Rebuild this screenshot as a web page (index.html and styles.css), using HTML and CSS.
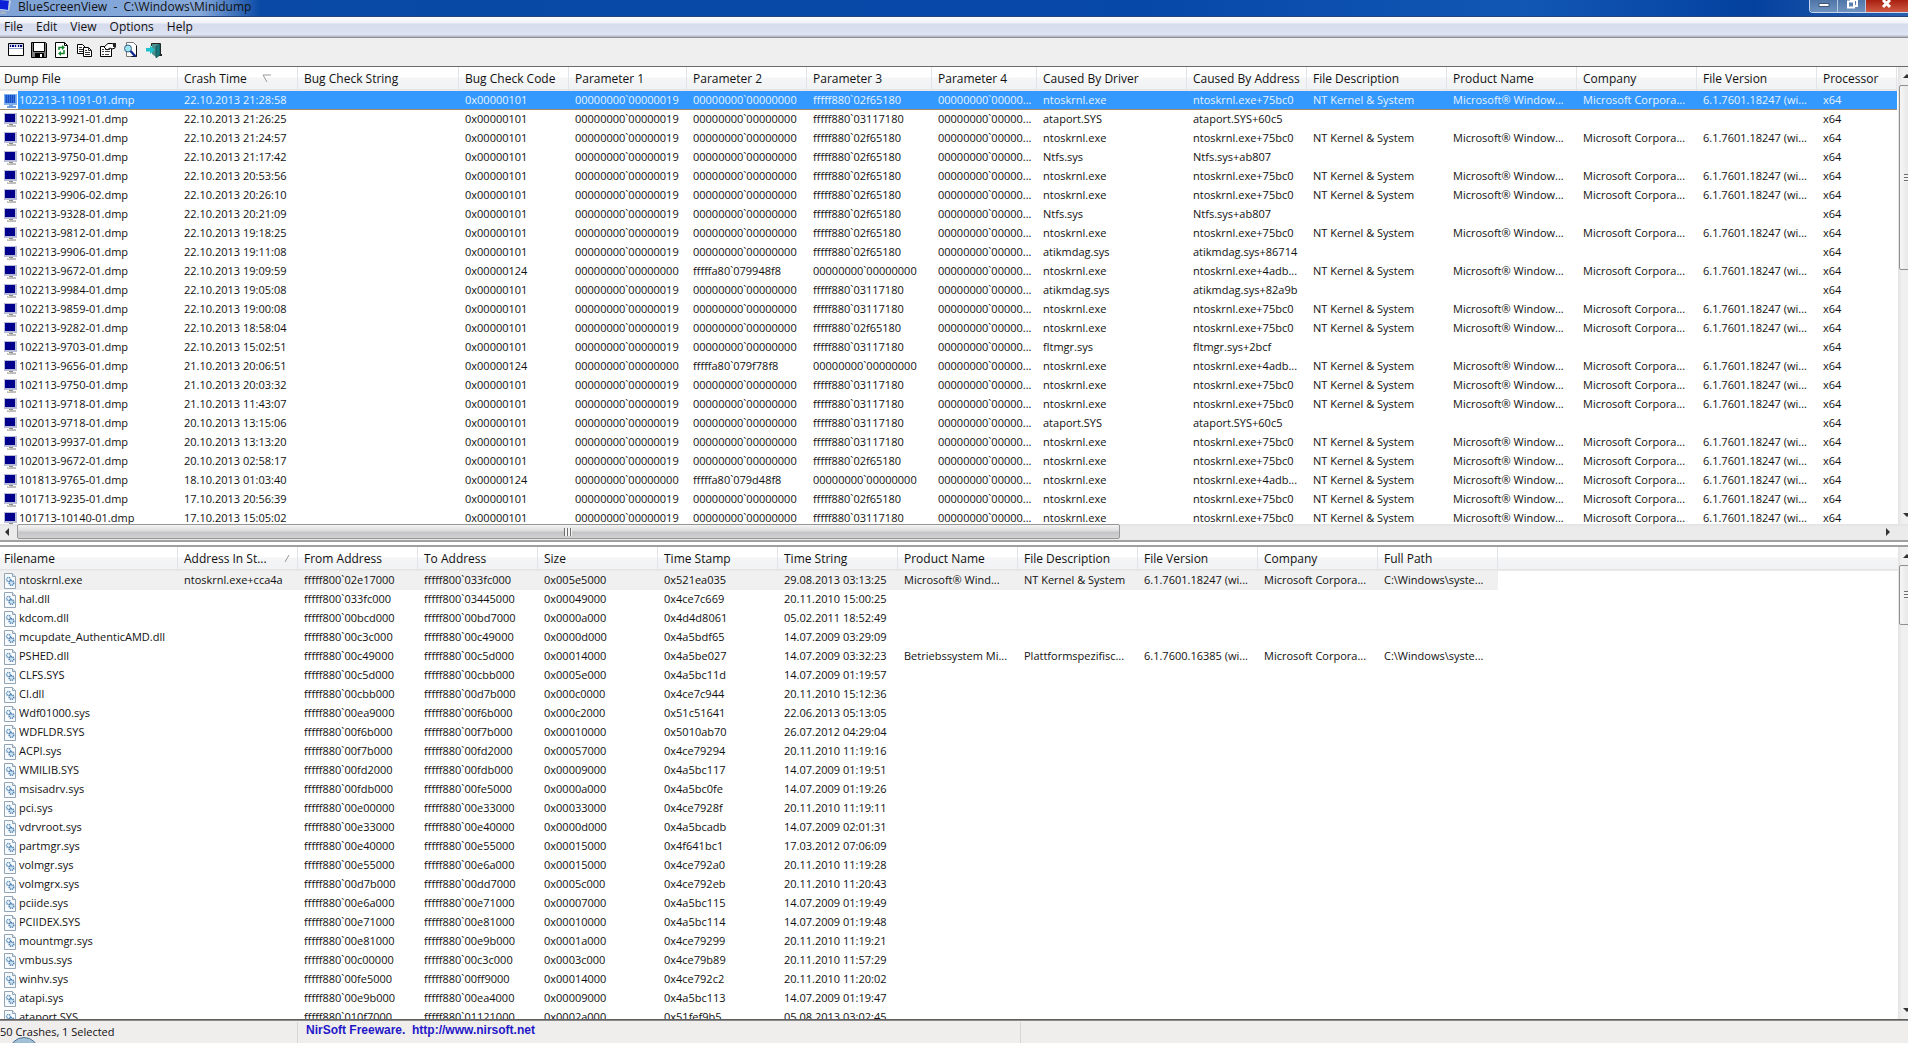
FILE: index.html
```html
<!doctype html>

<html lang="en">
<head>
    <meta charset="utf-8">
    <title>BlueScreenView</title>
    <link rel="stylesheet" href="styles.css">
</head>

<body>
    <svg width="0" height="0" class="defs">
        <symbol id="monitor" viewBox="0 0 16 16">
            <path d="M1 1h13v11H1z" fill="#b9bcd6"/>
            <path d="M2 2h10v8H2z" fill="#00008c"/>
            <path d="M6 12h4v1H6z" fill="#8d8d8d"/>
            <path d="M4 13h9v2H4z" fill="#bdbdbd"/>
            <path d="M5 13h2v1H5z" fill="#e8e4b0"/>
        </symbol>
        <symbol id="monitor-selected" viewBox="0 0 16 16">
            <path d="M1 1h13v11H1z" fill="#7fb0ee"/>
            <path d="M2 2h10v8H2z" fill="#1b4fc4"/>
            <path d="M2 3h11M2 5h11M2 7h11M2 9h11" stroke="#4d94f5" stroke-dasharray="1 1"/>
            <path d="M6 12h4v1H6zM4 13h9v2H4z" fill="#6f9fdc"/>
        </symbol>
        <symbol id="gears" viewBox="0 0 16 16">
            <path d="M1.500 .5h8l3 3v12h-11z" fill="#f6fafd" stroke="#93a5b5"/>
            <path d="M9.500 .5v3h3" fill="#dfe9f2" stroke="#93a5b5"/>
            <circle cx="5.500" cy="6.500" r="2" fill="none" stroke="#5b8fb9" stroke-width="1.500" stroke-dasharray="1.200 .6"/>
            <circle cx="8.500" cy="10" r="2.300" fill="#cfe2f1" stroke="#4a7fae" stroke-width="1.500" stroke-dasharray="1.200 .6"/>
        </symbol>
    </svg>

    <div class="window">
        <header class="titlebar">
            <svg class="app-icon" viewBox="0 0 11 14"><path d="M0 0l9 1-1 9-8-1z" fill="#0a1fd8"/><path d="M9 0l2 1-2 10-9-1v-1l8 1z" fill="#c3cfe6"/><path d="M1 11l5 1v2H0z" fill="#a9b4c4"/></svg>
            <h1>BlueScreenView&nbsp; -&nbsp; C:\Windows\Minidump</h1>
            <div class="window-buttons">
                <button type="button" class="min-button" aria-label="Minimize"><svg viewBox="0 0 14 10"><path d="M2 3.500h10v3H2z" fill="#fff" stroke="#3f5675"/></svg></button>
                <button type="button" class="max-button" aria-label="Restore"><svg viewBox="0 0 14 10"><path d="M5 0h7v6h-2M3 1.500h6v6H3z" fill="none" stroke="#fff" stroke-width="2"/></svg></button>
                <button type="button" class="close-button" aria-label="Close"><svg viewBox="0 0 14 10"><path d="M3 0l7 7M10 0L3 7" stroke="#fff" stroke-width="3"/></svg></button>
            </div>
        </header>

        <nav class="menu">
            <button type="button">File</button>
            <button type="button">Edit</button>
            <button type="button">View</button>
            <button type="button">Options</button>
            <button type="button">Help</button>
        </nav>

        <div class="toolbar">
            <button type="button" aria-label="Advanced options">
                <svg viewBox="0 0 16 16"><path d="M.5 1.500h15v12H.5z" fill="#fff" stroke="#000"/><path d="M1 2h14v3H1z" fill="#c9d3ee"/><path d="M2 4h1M4 4h2M7 4h1M10 4h1M12 4h2" stroke="#00007a" stroke-width="2"/><path d="M1 6.500h14" stroke="#8ba0cf"/></svg>
            </button>
            <button type="button" aria-label="Save">
                <svg viewBox="0 0 16 16"><path d="M.5.5h14l1 1v14H.5z" fill="#808080" stroke="#000"/><path d="M3 1h10v8H3z" fill="#fff"/><path d="M2.500 1v8.500h11V1" fill="none" stroke="#000"/><path d="M4 11h9v5H4z" fill="#000"/><path d="M9 12h2v3H9z" fill="#fff"/></svg>
            </button>
            <button type="button" aria-label="Refresh">
                <svg viewBox="0 0 16 16"><path d="M1.500.5h9l3 3v12h-12z" fill="#fff" stroke="#000"/><path d="M10.500.5v3h3" fill="none" stroke="#000"/><path d="M5 8V5.500h4M10 8v3.500H6" fill="none" stroke="#15852b" stroke-width="1.500"/><path d="M8 3l3 2.500L8 8zM7 9l-3 2.500L7 14z" fill="#15852b"/></svg>
            </button>
            <button type="button" aria-label="Copy">
                <svg viewBox="0 0 16 16"><path d="M.5 2.500h5l3 3v6h-8z" fill="#fff" stroke="#000"/><path d="M2 5.500h3M2 7.500h5M2 9.500h5" stroke="#333"/><path d="M6.500 5.500h5l3 3v6h-8z" fill="#fff" stroke="#000"/><path d="M11.500 5.500v3h3M8 8.500h2M8 10.500h5M8 12.500h5" fill="none" stroke="#333"/></svg>
            </button>
            <button type="button" aria-label="Properties">
                <svg viewBox="0 0 16 16"><path d="M.5 4.500h11v10H.5z" fill="#fff" stroke="#000"/><path d="M2 7.500h2M5 7.500h5M2 9.500h2M5 9.500h5M2 12.500h2M5 12.500h4" stroke="#444"/><path d="M4 5l4-3.500h4l3 1.500v3l-3 1-2-1-3 2z" fill="#fff" stroke="#000"/><path d="M13 1h3v4h-3z" fill="#222"/></svg>
            </button>
            <button type="button" aria-label="Find">
                <svg viewBox="0 0 16 16"><path d="M3.500.5h7l3 3v11h-10z" fill="#fff" stroke="#777"/><path d="M13.500 3.500v11h-5" fill="none" stroke="#111"/><circle cx="5" cy="6.500" r="3.500" fill="#9de3ec" stroke="#3b5f8c"/><path d="M7.500 9l5 5.500" stroke="#122a8c" stroke-width="2.500"/></svg>
            </button>
            <button type="button" aria-label="Exit">
                <svg viewBox="0 0 16 16"><path d="M5.500 4V1.500h9V13" fill="none" stroke="#222"/><path d="M14 2v10h2v2h-3z" fill="#222"/><path d="M6 2h8l-4 3v10l-4-3z" fill="#4a8f90"/><path d="M10 4.500l4-2.500v11l-4 3z" fill="#17797c" stroke="#0d3f40" stroke-width=".6"/><path d="M0 6h4V3.500L9 8l-5 4V9.500H0z" fill="#1fc2cc"/></svg>
            </button>
        </div>

        <section class="pane">
            <div class="list">
                <table class="crashes">
                    <colgroup>
                        <col class="w178"><col class="w120"><col class="w161"><col class="w110"><col class="w118"><col class="w120"><col class="w125"><col class="w105"><col class="w150"><col class="w120"><col class="w140"><col class="w130"><col class="w120"><col class="w120"><col class="w80">
                    </colgroup>
                    <thead>
                        <tr>
                            <th>Dump File</th>
                            <th>Crash Time <svg class="sort-desc" viewBox="0 0 10 9"><path d="M9 1H1l4 7" fill="none" stroke="#9a9a9a"/></svg></th>
                            <th>Bug Check String</th>
                            <th>Bug Check Code</th>
                            <th>Parameter 1</th>
                            <th>Parameter 2</th>
                            <th>Parameter 3</th>
                            <th>Parameter 4</th>
                            <th>Caused By Driver</th>
                            <th>Caused By Address</th>
                            <th>File Description</th>
                            <th>Product Name</th>
                            <th>Company</th>
                            <th>File Version</th>
                            <th>Processor</th>
                        </tr>
                    </thead>
                    <tbody id="crash-rows"></tbody>
                </table>
            </div>
            <div class="vscroll">
                <span class="arrow up"></span>
                <div class="vthumb tall"><span class="grip"></span></div>
                <span class="arrow down"></span>
            </div>
            <div class="hscroll">
                <span class="arrow left"></span>
                <div class="htrack"><div class="hthumb"><span class="grip side"></span></div></div>
                <span class="arrow right"></span>
            </div>
        </section>

        <section class="pane lower">
            <div class="list">
                <table class="drivers">
                    <colgroup>
                        <col class="w178"><col class="w120"><col class="w120"><col class="w120"><col class="w120"><col class="w120"><col class="w120"><col class="w120"><col class="w120"><col class="w120"><col class="w120"><col class="w120">
                    </colgroup>
                    <thead>
                        <tr>
                            <th>Filename</th>
                            <th>Address In St... <svg class="sort-asc" viewBox="0 0 10 9"><path d="M3 8l4-7" fill="none" stroke="#9a9a9a"/></svg></th>
                            <th>From Address</th>
                            <th>To Address</th>
                            <th>Size</th>
                            <th>Time Stamp</th>
                            <th>Time String</th>
                            <th>Product Name</th>
                            <th>File Description</th>
                            <th>File Version</th>
                            <th>Company</th>
                            <th>Full Path</th>
                        </tr>
                    </thead>
                    <tbody id="driver-rows"></tbody>
                </table>
            </div>
            <div class="vscroll">
                <span class="arrow up"></span>
                <div class="vthumb short"><span class="grip"></span></div>
                <span class="arrow down"></span>
            </div>
        </section>

        <footer class="statusbar">
            <div class="count">50 Crashes, 1 Selected</div>
            <div class="credit"><a href="#">NirSoft Freeware.&nbsp; http://www.nirsoft.net</a></div>
            <span class="orb"></span>
        </footer>
    </div>

<script type="text/javascript">

const crashes = [
    // file, time, code, address low part, driver, offset
    ['102213-11091-01', '22.10.2013 21:28:58', '101', '02f65180', 'ntoskrnl.exe', '75bc0'],
    ['102213-9921-01', '22.10.2013 21:26:25', '101', '03117180', 'ataport.SYS', '60c5'],
    ['102213-9734-01', '22.10.2013 21:24:57', '101', '02f65180', 'ntoskrnl.exe', '75bc0'],
    ['102213-9750-01', '22.10.2013 21:17:42', '101', '02f65180', 'Ntfs.sys', 'ab807'],
    ['102213-9297-01', '22.10.2013 20:53:56', '101', '02f65180', 'ntoskrnl.exe', '75bc0'],
    ['102213-9906-02', '22.10.2013 20:26:10', '101', '02f65180', 'ntoskrnl.exe', '75bc0'],
    ['102213-9328-01', '22.10.2013 20:21:09', '101', '02f65180', 'Ntfs.sys', 'ab807'],
    ['102213-9812-01', '22.10.2013 19:18:25', '101', '02f65180', 'ntoskrnl.exe', '75bc0'],
    ['102213-9906-01', '22.10.2013 19:11:08', '101', '02f65180', 'atikmdag.sys', '86714'],
    ['102213-9672-01', '22.10.2013 19:09:59', '124', '079948f8', 'ntoskrnl.exe', '4adb...'],
    ['102213-9984-01', '22.10.2013 19:05:08', '101', '03117180', 'atikmdag.sys', '82a9b'],
    ['102213-9859-01', '22.10.2013 19:00:08', '101', '03117180', 'ntoskrnl.exe', '75bc0'],
    ['102213-9282-01', '22.10.2013 18:58:04', '101', '02f65180', 'ntoskrnl.exe', '75bc0'],
    ['102213-9703-01', '22.10.2013 15:02:51', '101', '03117180', 'fltmgr.sys', '2bcf'],
    ['102113-9656-01', '21.10.2013 20:06:51', '124', '079f78f8', 'ntoskrnl.exe', '4adb...'],
    ['102113-9750-01', '21.10.2013 20:03:32', '101', '03117180', 'ntoskrnl.exe', '75bc0'],
    ['102113-9718-01', '21.10.2013 11:43:07', '101', '03117180', 'ntoskrnl.exe', '75bc0'],
    ['102013-9718-01', '20.10.2013 13:15:06', '101', '03117180', 'ataport.SYS', '60c5'],
    ['102013-9937-01', '20.10.2013 13:13:20', '101', '03117180', 'ntoskrnl.exe', '75bc0'],
    ['102013-9672-01', '20.10.2013 02:58:17', '101', '02f65180', 'ntoskrnl.exe', '75bc0'],
    ['101813-9765-01', '18.10.2013 01:03:40', '124', '079d48f8', 'ntoskrnl.exe', '4adb...'],
    ['101713-9235-01', '17.10.2013 20:56:39', '101', '02f65180', 'ntoskrnl.exe', '75bc0'],
    ['101713-10140-01', '17.10.2013 15:05:02', '101', '03117180', 'ntoskrnl.exe', '75bc0']
]

const drivers = [
    // file, from, to, size, stamp, time
    ['ntoskrnl.exe', '02e17000', '033fc000', '005e5000', '521ea035', '29.08.2013 03:13:25'],
    ['hal.dll', '033fc000', '03445000', '00049000', '4ce7c669', '20.11.2010 15:00:25'],
    ['kdcom.dll', '00bcd000', '00bd7000', '0000a000', '4d4d8061', '05.02.2011 18:52:49'],
    ['mcupdate_AuthenticAMD.dll', '00c3c000', '00c49000', '0000d000', '4a5bdf65', '14.07.2009 03:29:09'],
    ['PSHED.dll', '00c49000', '00c5d000', '00014000', '4a5be027', '14.07.2009 03:32:23'],
    ['CLFS.SYS', '00c5d000', '00cbb000', '0005e000', '4a5bc11d', '14.07.2009 01:19:57'],
    ['CI.dll', '00cbb000', '00d7b000', '000c0000', '4ce7c944', '20.11.2010 15:12:36'],
    ['Wdf01000.sys', '00ea9000', '00f6b000', '000c2000', '51c51641', '22.06.2013 05:13:05'],
    ['WDFLDR.SYS', '00f6b000', '00f7b000', '00010000', '5010ab70', '26.07.2012 04:29:04'],
    ['ACPI.sys', '00f7b000', '00fd2000', '00057000', '4ce79294', '20.11.2010 11:19:16'],
    ['WMILIB.SYS', '00fd2000', '00fdb000', '00009000', '4a5bc117', '14.07.2009 01:19:51'],
    ['msisadrv.sys', '00fdb000', '00fe5000', '0000a000', '4a5bc0fe', '14.07.2009 01:19:26'],
    ['pci.sys', '00e00000', '00e33000', '00033000', '4ce7928f', '20.11.2010 11:19:11'],
    ['vdrvroot.sys', '00e33000', '00e40000', '0000d000', '4a5bcadb', '14.07.2009 02:01:31'],
    ['partmgr.sys', '00e40000', '00e55000', '00015000', '4f641bc1', '17.03.2012 07:06:09'],
    ['volmgr.sys', '00e55000', '00e6a000', '00015000', '4ce792a0', '20.11.2010 11:19:28'],
    ['volmgrx.sys', '00d7b000', '00dd7000', '0005c000', '4ce792eb', '20.11.2010 11:20:43'],
    ['pciide.sys', '00e6a000', '00e71000', '00007000', '4a5bc115', '14.07.2009 01:19:49'],
    ['PCIIDEX.SYS', '00e71000', '00e81000', '00010000', '4a5bc114', '14.07.2009 01:19:48'],
    ['mountmgr.sys', '00e81000', '00e9b000', '0001a000', '4ce79299', '20.11.2010 11:19:21'],
    ['vmbus.sys', '00c00000', '00c3c000', '0003c000', '4ce79b89', '20.11.2010 11:57:29'],
    ['winhv.sys', '00fe5000', '00ff9000', '00014000', '4ce792c2', '20.11.2010 11:20:02'],
    ['atapi.sys', '00e9b000', '00ea4000', '00009000', '4a5bc113', '14.07.2009 01:19:47'],
    ['ataport.SYS', '010f7000', '01121000', '0002a000', '51fef9b5', '05.08.2013 03:02:45']
]

// version details that only a few modules carry
const details = {
    'ntoskrnl.exe': ['Microsoft® Wind...', 'NT Kernel & System', '6.1.7601.18247 (wi...', 'Microsoft Corpora...', 'C:\\Windows\\syste...'],
    'PSHED.dll': ['Betriebssystem Mi...', 'Plattformspezifisc...', '6.1.7600.16385 (wi...', 'Microsoft Corpora...', 'C:\\Windows\\syste...']
}

function add_row(body, icon, cells, class_name)
{
    const row = body.insertRow()
    if (class_name) {
        row.className = class_name
    }
    cells.forEach(text => {
        row.insertCell().textContent = text
    })
    row.cells[0].insertAdjacentHTML('afterbegin', '<svg class="file-icon"><use href="#' + icon + '"/></svg>')
}

const crash_rows = document.querySelector('#crash-rows')
const driver_rows = document.querySelector('#driver-rows')

crashes.forEach(([file, time, code, low, driver, offset], i) => {
    const zero = '00000000`00000000'
    const params = code === '124'
        ? [zero, 'fffffa80`' + low, zero]
        : ['00000000`00000019', zero, 'fffff880`' + low]
    const info = driver === 'ntoskrnl.exe'
        ? ['NT Kernel & System', 'Microsoft® Window...', 'Microsoft Corpora...', '6.1.7601.18247 (wi...']
        : ['', '', '', '']

    add_row(crash_rows, i === 0 ? 'monitor-selected' : 'monitor',
        [file + '.dmp', time, '', '0x00000' + code, ...params, '00000000`00000...', driver, driver + '+' + offset, ...info, 'x64'],
        i === 0 ? 'selected' : '')
})

drivers.forEach(([file, from, to, size, stamp, time], i) => {
    // the kernel modules load below the fffff880 driver range
    const base = i < 3 ? 'fffff800`' : 'fffff880`'

    add_row(driver_rows, 'gears',
        [file, i === 0 ? 'ntoskrnl.exe+cca4a' : '', base + from, base + to, '0x' + size, '0x' + stamp, time, ...(details[file] || ['', '', '', '', ''])],
        i === 0 ? 'inactive' : '')
})

</script>
</body>
</html>
```

FILE: styles.css
```css
* {
    box-sizing: border-box;
}

body {
    margin: 0;
    background-color: #ffffff;
    color: #111111;
    font-family: "Open Sans", "Noto Sans", sans-serif;
    font-size: 11px;
}

button {
    border: 0;
    padding: 0;
    background: none;
    color: inherit;
    font: inherit;
}

.defs {
    position: absolute;
}

.window {
    display: flex;
    flex-direction: column;
    height: 100vh;
    padding: 0 11px 6px 0;
    overflow: hidden;
}

.titlebar {
    display: flex;
    height: 17px;
    background: linear-gradient(to right, #7fa3d6 0, #86a9da 200px, #0a4aa6 260px, #0648a8 60%, #1257b4 80%, #04419f 92%, #2a5fae 100%);
    border-bottom: 1px solid #26457a;
}

.app-icon {
    width: 11px;
    height: 14px;
    margin-right: 7px;
}

.titlebar h1 {
    flex: 1;
    margin: 0;
    font-size: 12px;
    font-weight: normal;
    line-height: 14px;
}

.window-buttons {
    display: flex;
    height: 13px;
    border: 1px solid #c5d6ee;
    border-width: 0 0 1px 1px;
    border-radius: 0 0 0 4px;
    overflow: hidden;
}

.window-buttons button {
    display: flex;
    justify-content: center;
    background: linear-gradient(#4f76a8, #6f92bf);
    border-right: 1px solid #b7c9e2;
}

.window-buttons svg {
    width: 14px;
    height: 10px;
}

.window-buttons .min-button,
.window-buttons .max-button {
    width: 28px;
}

.window-buttons .close-button {
    width: 42px;
    background: linear-gradient(#a8200f, #cf5a44);
    border-right: 0;
}

.menu {
    display: flex;
    gap: 13px;
    height: 20px;
    padding: 0 0 2px 4px;
    background: linear-gradient(#fbfcfe 0, #f0f3fa 6px, #d6dbed 7px, #dfe4f3 18px, #b8bac6 19px);
    font-size: 12px;
}

.toolbar {
    display: flex;
    align-items: center;
    gap: 7px;
    height: 30px;
    padding: 0 0 4px 8px;
    background-color: #efefef;
    border-top: 1px solid #8e8e96;
    border-bottom: 1px solid #6b6b6b;
}

.toolbar button,
.toolbar svg {
    display: block;
    width: 16px;
    height: 16px;
}

/* list panes */

.pane {
    flex: 1;
    display: grid;
    grid-template-columns: 1fr 10px;
    grid-template-rows: 1fr 16px;
    min-height: 0;
    border-bottom: 2px solid #a0a0a0;
}

.lower {
    grid-template-rows: 1fr;
    margin-top: 3px;
    border-top: 2px solid #a0a0a0;
    border-bottom: 1px solid #5f5f5f;
}

.list {
    min-height: 0;
    overflow: hidden;
    background: linear-gradient(#ffffff 0, #ffffff 10px, #f4f5f6 11px, #f1f2f4 22px, #d5d5d5 23px, #ffffff 24px);
}

table {
    table-layout: fixed;
    width: 0;
    border-collapse: separate;
    border-spacing: 0;
}

.w178 { width: 178px; }
.w161 { width: 161px; }
.w150 { width: 150px; }
.w140 { width: 140px; }
.w130 { width: 130px; }
.w125 { width: 125px; }
.w120 { width: 120px; }
.w118 { width: 118px; }
.w110 { width: 110px; }
.w105 { width: 105px; }
.w80 { width: 80px; }

th, td {
    padding: 0 0 0 6px;
    overflow: hidden;
    text-align: left;
    font-weight: normal;
    white-space: nowrap;
}

th {
    height: 24px;
    border-right: 1px solid #e2e4e8;
    font-size: 12px;
    line-height: 20px;
}

td {
    height: 19px;
    line-height: 18px;
    vertical-align: top;
}

th:first-child {
    padding-left: 4px;
}

td:first-child {
    padding-left: 3px;
}

.file-icon {
    width: 16px;
    height: 16px;
    margin-top: 2px;
    vertical-align: top;
}

.sort-desc, .sort-asc {
    width: 10px;
    height: 9px;
    margin-left: 12px;
}

.selected td {
    background-color: #3399ff;
    color: #e6f3ff;
    border-bottom: 1px solid #a08a6c;
}

.selected td:first-child {
    background: linear-gradient(to right, #ffffff 18px, #3399ff 18px);
}

.inactive td {
    background-color: #f0f0f0;
}

/* scrollbars, the right part runs off the window edge */

.vscroll {
    display: flex;
    flex-direction: column;
    align-items: flex-start;
    overflow: hidden;
    background: linear-gradient(to right, #e3e3e3, #f0f0f0 4px);
}

.vthumb {
    display: flex;
    align-items: center;
    justify-content: center;
    width: 17px;
    margin-left: 1px;
    background: linear-gradient(to right, #f6f6f6, #dcdcdc);
    border: 1px solid #8f8f8f;
    border-radius: 2px;
}

.tall {
    height: 185px;
}

.short {
    height: 60px;
}

.grip {
    width: 8px;
    height: 8px;
    background: repeating-linear-gradient(#6e6e6e 0, #6e6e6e 1px, #f4f4f4 1px, #f4f4f4 3px);
}

.side {
    background: repeating-linear-gradient(to right, #6e6e6e 0, #6e6e6e 1px, #f4f4f4 1px, #f4f4f4 3px);
}

.arrow {
    flex: none;
    border: 4px solid transparent;
}

.up {
    margin: 3px 0 7px 5px;
    border-bottom-color: #333333;
}

.down {
    margin: auto 0 3px 5px;
    border-top-color: #333333;
}

.hscroll {
    grid-column: 1 / 3;
    display: flex;
    align-items: center;
    padding-right: 14px;
    background: linear-gradient(#e2e2e2, #ebebeb 3px);
}

.left {
    margin: 0 8px 0 1px;
    border-right-color: #333333;
}

.right {
    border-left-color: #333333;
}

.htrack {
    flex: 1;
    height: 15px;
}

.hthumb {
    display: flex;
    align-items: center;
    justify-content: center;
    width: 59%;
    height: 15px;
    background: linear-gradient(#f4f4f4 0, #dcdcdc 6px, #c4c4c6 7px, #d4d4d6 14px);
    border: 1px solid #979797;
    border-radius: 2px;
}

/* status bar */

.statusbar {
    position: relative;
    display: flex;
    height: 23px;
    padding-top: 1px;
    overflow: hidden;
    background-color: #f0eded;
    border-top: 1px solid #8a8a8a;
    line-height: 20px;
}

.count {
    width: 298px;
    border-right: 1px solid #d8d5d5;
}

.credit {
    width: 723px;
    padding-left: 8px;
    border-right: 1px solid #d8d5d5;
    font-family: "Liberation Sans", Arial, sans-serif;
    font-size: 12px;
    font-weight: bold;
    line-height: 16px;
}

.credit a {
    color: #2418c8;
    text-decoration: none;
}

.orb {
    position: absolute;
    left: 9px;
    top: 16px;
    width: 30px;
    height: 30px;
    border: 1px solid #4a6f8f;
    border-radius: 50%;
    background: linear-gradient(#a9c6dc, #5f8cb0);
}
```
